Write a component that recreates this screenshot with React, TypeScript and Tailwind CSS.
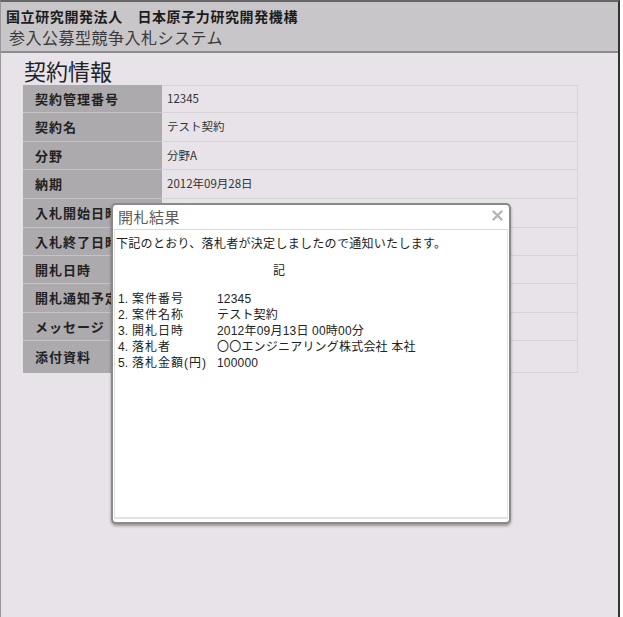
const jp = { fontFamily: '"Noto Sans CJK JP", "Noto Sans", sans-serif' };
const listFont = { fontFamily: '"Liberation Sans", "Noto Sans CJK JP", sans-serif' };

type Row = { label: string; value?: string; h: number };

const rows: Row[] = [
  { label: "契約管理番号", value: "12345", h: 28 },
  { label: "契約名", value: "テスト契約", h: 29 },
  { label: "分野", value: "分野A", h: 28 },
  { label: "納期", value: "2012年09月28日", h: 29 },
  { label: "入札開始日時", h: 29 },
  { label: "入札終了日時", h: 28 },
  { label: "開札日時", h: 28 },
  { label: "開札通知予定日", h: 29 },
  { label: "メッセージ", h: 28 },
  { label: "添付資料", h: 32 },
];

const results = [
  ["1.", "案件番号", "12345"],
  ["2.", "案件名称", "テスト契約"],
  ["3.", "開札日時", "2012年09月13日 00時00分"],
  ["4.", "落札者", "〇〇エンジニアリング株式会社 本社"],
  ["5.", "落札金額(円)", "100000"],
];

function ResultDialog() {
  return (
    <div className="absolute left-[110px] top-[201px] flex h-[321px] w-[400px] flex-col rounded-[5px] border-2 border-[#8a8a8a] bg-white shadow-[0_2px_3px_rgba(0,0,0,0.35)]">
      <div className="relative h-[24px] shrink-0 pl-[5px]">
        <span className="block pt-[4px] text-[15px] leading-[16px] tracking-[0.5px] text-[#5c5c5c]">開札結果</span>
        <svg
          className="absolute right-[6px] top-[5px]"
          width="11"
          height="11"
          viewBox="0 0 11 11"
        >
          <path d="M1.5 1.5 L9.5 9.5 M9.5 1.5 L1.5 9.5" stroke="#b4b4b4" strokeWidth="2.4" strokeLinecap="round" />
        </svg>
      </div>
      <div className="mx-[1px] mb-[3px] flex-1 border-x border-t border-b-2 border-x-[#e4e4e4] border-t-[#d9d9d9] border-b-[#e2e2e2] pl-[1px] pt-[5px] text-[12px] leading-[16px] text-[#222]">
        <p className="tracking-[0.3px]">下記のとおり、落札者が決定しましたので通知いたします。</p>
        <p className="mt-[11px] w-[326px] text-center">記</p>
        <ul className="mt-[13px]" style={listFont}>
          {results.map(([no, label, value]) => (
            <li key={no} className="flex h-[16px] items-center whitespace-nowrap">
              <span className="w-[16px] pl-[2px]">{no}</span>
              <span className="w-[85px] tracking-[1px]">{label}</span>
              <span className="text-[12px] tracking-[0.2px]">{value}</span>
            </li>
          ))}
        </ul>
      </div>
    </div>
  );
}

export default function App() {
  return (
    <div className="h-[617px] w-[623px] bg-white" style={jp}>
      <div className="relative h-[617px] w-[620px] border-l border-r-2 border-t-2 border-l-[#9a979a] border-r-[#333] border-t-[#666] bg-[#e8e3e8]">
        <header className="h-[51px] border-b-2 border-[#8e8b8e] bg-[#c9c6c9] pl-[5px] pt-[5px]">
          <div className="text-[14px] font-bold leading-[18px] tracking-[0.6px] text-[#1c1c1c]">
            国立研究開発法人　日本原子力研究開発機構
          </div>
          <div className="mt-[2px] pl-[3px] text-[16px] leading-[20px] tracking-[0.5px] text-[#3a3a3a]">
            参入公募型競争入札システム
          </div>
        </header>

        <main className="px-[22px]">
          <h1 className="mt-[3px] pl-[1px] text-[22px] leading-[28px] text-[#222]">契約情報</h1>
          <div className="mt-[1px] w-[555px] border-r border-[#d8d4d8]">
            {rows.map((r, i) => (
              <div key={r.label} className="flex" style={{ height: r.h }}>
                <div
                  className={`flex w-[139px] shrink-0 items-center overflow-hidden whitespace-nowrap bg-[#adaaad] pl-[12px] text-[13px] font-bold tracking-[1px] text-[#222] ${
                    i < rows.length - 1 ? "border-b border-[#c6c2c6]" : ""
                  }`}
                >
                  {r.label}
                </div>
                <div
                  className={`flex flex-1 items-center border-b border-[#d6d2d6] pl-[5px] text-[11.5px] text-[#333] ${
                    i === 0 ? "border-t" : ""
                  }`}
                >
                  {r.value}
                </div>
              </div>
            ))}
          </div>
        </main>

        <ResultDialog />
      </div>
    </div>
  );
}
